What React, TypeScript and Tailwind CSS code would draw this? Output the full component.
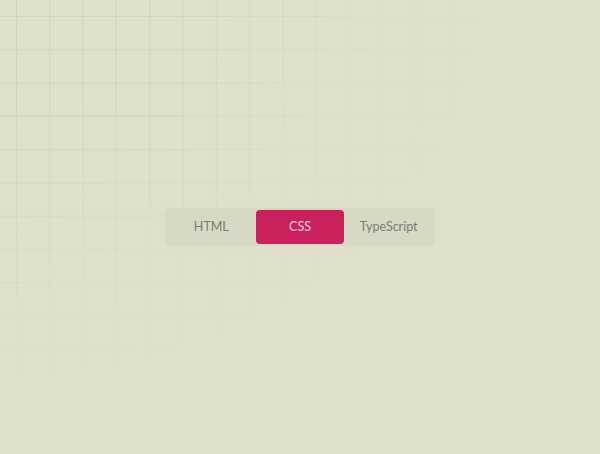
import { useState } from "react";

const tabs = ["HTML", "CSS", "TypeScript"];

export default function App() {
  const [active, setActive] = useState("CSS");

  return (
    <div className="relative h-[454px] w-[600px] overflow-hidden bg-[#dfe0cc] font-['Lato','Open_Sans',sans-serif]">
      {/* faded grid in the top-left corner */}
      <div className="pointer-events-none absolute inset-0 bg-[linear-gradient(to_right,rgba(120,120,90,0.11)_1px,transparent_1px),linear-gradient(to_bottom,rgba(120,120,90,0.11)_1px,transparent_1px)] bg-[length:33.3px_33.3px] bg-[position:16px_16px] [mask-image:radial-gradient(ellipse_480px_380px_at_0_0,black_30%,transparent_100%)]" />

      <div className="relative flex h-full items-center justify-center">
        <div className="grid w-[270px] grid-cols-3 rounded-[5px] bg-[#d7d9c5] p-[2px] shadow-[0_0_2px_rgba(0,0,0,0.04)]">
          {tabs.map((tab) => (
            <button
              key={tab}
              onClick={() => setActive(tab)}
              className={
                tab === active
                  ? "h-[34px] rounded-[4px] bg-[#c8215b] text-[12.5px] text-[#fbd3e2]"
                  : "h-[34px] rounded-[4px] text-[12.5px] text-[#7a7c73]"
              }
            >
              {tab}
            </button>
          ))}
        </div>
      </div>
    </div>
  );
}
